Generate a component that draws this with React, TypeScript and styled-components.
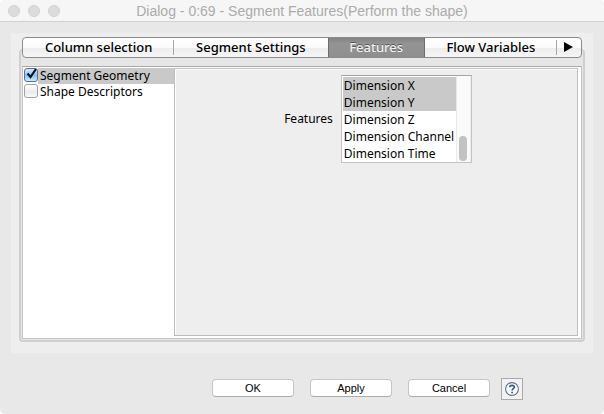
import React, { useState } from "react";
import styled, { createGlobalStyle, css } from "styled-components";

const GlobalStyle = createGlobalStyle`
  *, *::before, *::after { box-sizing: border-box; }
  body { margin: 0; background: #fff; }
`;

const uiFont = `"Noto Sans", "Open Sans", sans-serif`;
const systemFont = `"Liberation Sans", Arial, sans-serif`;

const Window = styled.div`
  display: flex;
  flex-direction: column;
  min-height: 100vh;
  background: #e8e8e8;
  border-radius: 5px;
  overflow: hidden;
  font: 12px/16px ${uiFont};
  color: #000;
`;

const TitleBar = styled.header`
  display: grid;
  grid-template-columns: 1fr auto 1fr;
  align-items: center;
  height: 22px;
  flex: none;
  padding: 0 8px;
  background: #f6f6f6;
  border-bottom: 1px solid #d1d1d1;
`;

const Lights = styled.div`
  display: flex;
  gap: 8px;
`;

const Light = styled.button`
  width: 12px;
  height: 12px;
  padding: 0;
  border: 1px solid #d0d0d0;
  border-radius: 50%;
  background: #dcdcdc;
`;

const Title = styled.h1`
  margin: 0;
  font: 400 14px/20px ${systemFont};
  color: #ababab;
  white-space: nowrap;
`;

const Panel = styled.main`
  display: flex;
  flex: 1;
  margin: 11px 11px 0;
  padding: 16px 8px 11px;
  background: #eee;
`;

const Frame = styled.section`
  display: flex;
  flex-direction: column;
  flex: 1;
  min-width: 0;
  padding: 0 1px 1px;
  border: 2px solid #cfcfcf;
  border-top-width: 1px;
  border-radius: 4px;
  background: #e6e6e6;
`;

const TabBar = styled.div`
  display: flex;
  flex: none;
  height: 21px;
  margin-top: -13px;
  margin-bottom: 8px;
  border: 1px solid #8b8b8b;
  border-radius: 4px;
  background: linear-gradient(#fff 0, #fbfbfb 50%, #ececec 51%, #f6f6f6 100%);
  overflow: hidden;
`;

const Tab = styled.button<{ $grow: number; $selected?: boolean; $divided?: boolean }>`
  flex: ${(p) => p.$grow} 1 0;
  min-width: 0;
  padding: 0;
  border: 0;
  background: ${(p) => (p.$selected ? "linear-gradient(#828282, #949494 30%, #8e8e8e)" : "none")};
  color: ${(p) => (p.$selected ? "#f2f2f2" : "#000")};
  font: 500 13px/19px ${uiFont};
  white-space: nowrap;
  ${(p) =>
    p.$selected &&
    css`
      box-shadow: inset 1px 0 #6d6d6d, inset -1px 0 #6d6d6d;
      text-shadow: 0 -1px #555;
    `}
  ${(p) =>
    p.$divided &&
    css`
      background: linear-gradient(#a8a8a8, #a8a8a8) right center / 1px 15px no-repeat;
    `}
`;

const Split = styled.div`
  display: grid;
  grid-template-columns: minmax(0, 151fr) minmax(0, 407fr);
  flex: 1;
  border: 1px solid #c4c4c4;
  border-top-color: #a8a8a8;
  background: #fff;
`;

const FeatureSets = styled.ul`
  margin: 0;
  padding: 1px 0 0 1px;
  list-style: none;
`;

const SetRow = styled.li`
  height: 16px;
`;

const SetLabel = styled.label`
  display: flex;
  height: 16px;
`;

const SetName = styled.span<{ $selected?: boolean }>`
  flex: 1;
  padding-left: 2px;
  background: ${(p) => (p.$selected ? "#c9c9c9" : "transparent")};
  white-space: nowrap;
`;

const Tick = styled.span`
  position: relative;
  flex: none;
  width: 14px;
  height: 14px;
`;

const TickInput = styled.input`
  appearance: none;
  display: block;
  width: 14px;
  height: 14px;
  margin: 0;
  border: 1px solid #a2a2a2;
  border-radius: 3px;
  background: linear-gradient(#fff, #ececec 60%, #fafafa);
  &:checked {
    border-color: #5b6f9b;
    background: linear-gradient(#d6e9fb, #8fc1f0 55%, #c3f0ff);
  }
`;

const TickMark = styled.svg`
  position: absolute;
  top: 0;
  left: 2px;
  width: 12px;
  height: 12px;
  pointer-events: none;
`;

const Detail = styled.div`
  margin: 1px 3px 2px 0;
  border: 1px solid #bdbdbd;
  background: #eee;
  box-shadow: inset 1px 1px #fff, 1px 1px #fff;
  padding: 6px 0;
`;

const Field = styled.div`
  display: flex;
  align-items: center;
  justify-content: center;
  gap: 8px;
  padding-left: 4px;
`;

const ListBox = styled.div`
  display: flex;
  width: 131px;
  height: 88px;
  border: 1px solid #c3c3c3;
  border-top-color: #a5a5a5;
  background: #fff;
`;

const Options = styled.select`
  flex: 1;
  min-width: 0;
  height: 86px;
  margin: 0;
  padding: 1px 0 0 1px;
  border: 0;
  outline: 0;
  background: #fff;
  color: #000;
  font: 12px/17px ${uiFont};
  overflow: hidden;
  scrollbar-width: none;
`;

const Option = styled.option`
  height: 17px;
  min-height: 17px;
  padding: 0 0 0 1px;
  line-height: 17px;
  &:checked {
    background: #c9c9c9 linear-gradient(#c9c9c9, #c9c9c9);
    color: #000;
  }
`;

const ScrollTrack = styled.div`
  display: flex;
  align-items: flex-end;
  justify-content: center;
  flex: none;
  width: 15px;
  padding-bottom: 1px;
  border-left: 1px solid #e9e9e9;
  border-right: 1px solid #ededed;
  background: #fafafa;
`;

const ScrollThumb = styled.div`
  width: 8px;
  height: 25px;
  border-radius: 4px;
  background: #c2c2c2;
`;

const Footer = styled.footer`
  display: flex;
  justify-content: flex-end;
  flex: none;
  gap: 16px;
  padding: 25px 81px 14px 16px;
`;

const PushButton = styled.button`
  width: 82px;
  height: 18px;
  margin-top: 1px;
  padding: 0;
  border: 1px solid #c6c6c6;
  border-bottom-color: #acacac;
  border-radius: 4px;
  background: #fff;
  color: #000;
  font: 11px/16px ${systemFont};
`;

const HelpButton = styled.button`
  display: flex;
  align-items: center;
  justify-content: center;
  width: 22px;
  height: 22px;
  margin-left: -5px;
  padding: 0;
  border: 1px solid #aaa;
  background: #f2f2f2;
`;

const sets = ["Segment Geometry", "Shape Descriptors"];
const features = ["Dimension X", "Dimension Y", "Dimension Z", "Dimension Channel", "Dimension Time"];

export default function App() {
  const [enabled, setEnabled] = useState<string[]>([sets[0]]);
  const [chosen, setChosen] = useState<string[]>(features.slice(0, 2));

  const toggle = (name: string) =>
    setEnabled((now) => (now.includes(name) ? now.filter((n) => n !== name) : [...now, name]));

  return (
    <>
      <GlobalStyle />
      <Window>
        <TitleBar>
          <Lights>
            <Light aria-label="Close" />
            <Light aria-label="Minimize" />
            <Light aria-label="Zoom" />
          </Lights>
          <Title>Dialog - 0:69 - Segment Features(Perform the shape)</Title>
        </TitleBar>
        <Panel>
          <Frame>
            <TabBar role="tablist">
              <Tab role="tab" $grow={151} $divided>Column selection</Tab>
              <Tab role="tab" $grow={153}>Segment Settings</Tab>
              <Tab role="tab" $grow={97} $selected aria-selected>Features</Tab>
              <Tab role="tab" $grow={132} $divided>Flow Variables</Tab>
              <Tab $grow={24} aria-label="More tabs">
                <svg width="9" height="10" viewBox="0 0 9 10" aria-hidden="true">
                  <path d="M0 0L9 5L0 10Z" fill="#000" />
                </svg>
              </Tab>
            </TabBar>
            <Split>
              <FeatureSets>
                {sets.map((name, i) => (
                  <SetRow key={name}>
                    <SetLabel>
                      <Tick>
                        <TickInput
                          type="checkbox"
                          checked={enabled.includes(name)}
                          onChange={() => toggle(name)}
                        />
                        {enabled.includes(name) && (
                          <TickMark viewBox="0 0 12 12" aria-hidden="true">
                            <path d="M1.5 5.5L4.5 9L10 1" fill="none" stroke="#0a1226" strokeWidth="2.2" />
                          </TickMark>
                        )}
                      </Tick>
                      <SetName $selected={i === 0}>{name}</SetName>
                    </SetLabel>
                  </SetRow>
                ))}
              </FeatureSets>
              <Detail>
                <Field>
                  <label htmlFor="features">Features</label>
                  <ListBox>
                    <Options
                      id="features"
                      multiple
                      size={5}
                      value={chosen}
                      onChange={(e) => setChosen(Array.from(e.target.selectedOptions, (o) => o.value))}
                    >
                      {features.map((name) => (
                        <Option key={name}>{name}</Option>
                      ))}
                    </Options>
                    <ScrollTrack>
                      <ScrollThumb />
                    </ScrollTrack>
                  </ListBox>
                </Field>
              </Detail>
            </Split>
          </Frame>
        </Panel>
        <Footer>
          <PushButton>OK</PushButton>
          <PushButton>Apply</PushButton>
          <PushButton>Cancel</PushButton>
          <HelpButton aria-label="Help">
            <svg width="14" height="14" viewBox="0 0 14 14" fill="none" aria-hidden="true">
              <circle cx="7" cy="7" r="6.4" fill="#fbfcfe" stroke="#5d7390" strokeWidth="1.1" />
              <path d="M4.8 5.3C4.8 2.6 9.3 2.7 9.3 5.1C9.3 6.7 7.1 6.7 7.1 8.6" stroke="#3f5a80" strokeWidth="1.7" />
              <path d="M6.2 9.7H8V11.3H6.2Z" fill="#3f5a80" />
            </svg>
          </HelpButton>
        </Footer>
      </Window>
    </>
  );
}
